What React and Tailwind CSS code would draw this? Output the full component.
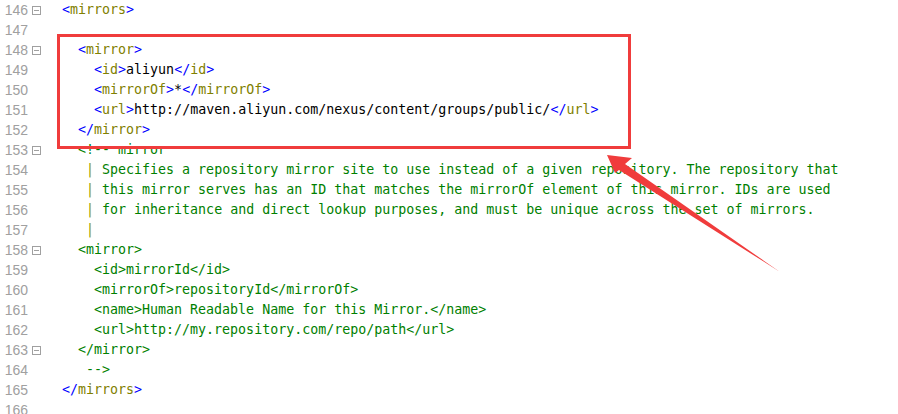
import React from 'react';

const B = '#0000ff';
const T = '#808000';
const X = '#000000';
const C = '#008000';

const tag = (name) => [['<', B], [name, T], ['>', B]];
const close = (name) => [['</', B], [name, T], ['>', B]];

const lines = [
  { n: 146, fold: true, parts: [...tag('mirrors')] },
  { n: 147, parts: [] },
  { n: 148, fold: true, parts: [['  ', X], ...tag('mirror')] },
  { n: 149, parts: [['    ', X], ...tag('id'), ['aliyun', X], ...close('id')] },
  { n: 150, parts: [['    ', X], ...tag('mirrorOf'), ['*', X], ...close('mirrorOf')] },
  {
    n: 151,
    parts: [['    ', X], ...tag('url'), ['http://maven.aliyun.com/nexus/content/groups/public/', X], ...close('url')],
  },
  { n: 152, parts: [['  ', X], ...close('mirror')] },
  { n: 153, fold: true, parts: [['  <!-- mirror', C]] },
  {
    n: 154,
    bar: true,
    parts: [[' Specifies a repository mirror site to use instead of a given repository. The repository that', C]],
  },
  {
    n: 155,
    bar: true,
    parts: [[' this mirror serves has an ID that matches the mirrorOf element of this mirror. IDs are used', C]],
  },
  {
    n: 156,
    bar: true,
    parts: [[' for inheritance and direct lookup purposes, and must be unique across the set of mirrors.', C]],
  },
  { n: 157, bar: true, parts: [] },
  { n: 158, fold: true, parts: [['  <mirror>', C]] },
  { n: 159, parts: [['    <id>mirrorId</id>', C]] },
  { n: 160, parts: [['    <mirrorOf>repositoryId</mirrorOf>', C]] },
  { n: 161, parts: [['    <name>Human Readable Name for this Mirror.</name>', C]] },
  { n: 162, parts: [['    <url>http://my.repository.com/repo/path</url>', C]] },
  { n: 163, fold: true, parts: [['  </mirror>', C]] },
  { n: 164, parts: [['   -->', C]] },
  { n: 165, parts: [...tag('/mirrors').map((p, i) => (i === 0 ? ['</', B] : i === 1 ? ['mirrors', T] : p))] },
  { n: 166, parts: [] },
];

const FoldBox = () => (
  <svg width="9" height="9" viewBox="0 0 9 9" className="block">
    <rect x="0.5" y="0.5" width="8" height="8" fill="none" stroke="#a0a0a0" />
    <line x1="2" y1="4.5" x2="7" y2="4.5" stroke="#a0a0a0" />
  </svg>
);

const Line = ({ line }) => (
  <div className="flex h-[20px] items-center">
    <div className="w-[28px] text-right text-[14px] leading-[20px] text-[#a0a0a0] font-['Liberation_Sans',Arial,sans-serif]">
      {line.n}
    </div>
    <div className="w-[34px] pl-[4px]">{line.fold && <FoldBox />}</div>
    <div className="whitespace-pre text-[13.3px] leading-[20px] font-['DejaVu_Sans_Mono',monospace]">
      {line.bar && (
        <>
          <span>{'   '}</span>
          <span className="text-[#8a9c00]">|</span>
        </>
      )}
      {line.parts.map(([text, color], i) => (
        <span key={i} style={{ color }}>
          {text}
        </span>
      ))}
    </div>
  </div>
);

export default function App() {
  return (
    <div className="relative w-[898px] h-[414px] overflow-hidden bg-white">
      {lines.map((line) => (
        <Line key={line.n} line={line} />
      ))}

      {/* highlight box */}
      <div className="absolute left-[57px] top-[34px] w-[574px] h-[115px] border-[3px] border-[#f03c3c]" />

      {/* arrow */}
      <svg className="absolute left-0 top-0" width="898" height="414">
        <polygon
          points="607,155 632,158 625,164 780,272 619,170 615,173"
          fill="#f03c3c"
        />
      </svg>
    </div>
  );
}
